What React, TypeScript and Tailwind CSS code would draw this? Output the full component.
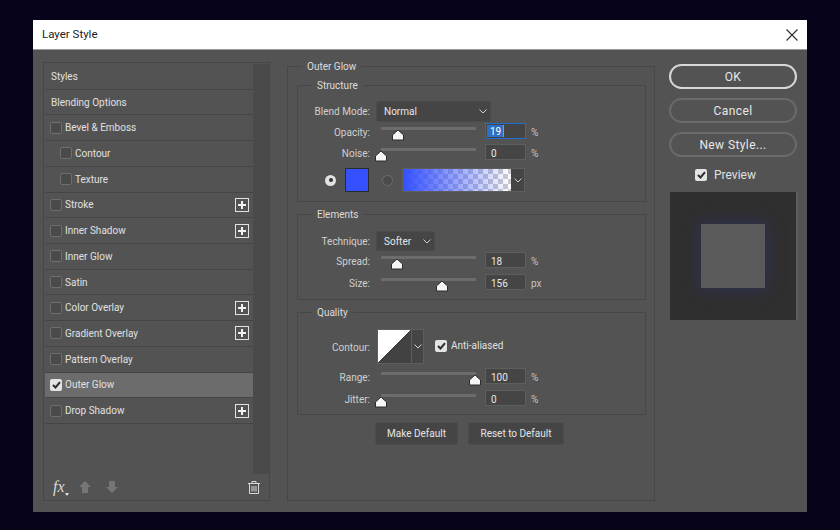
import type { ReactNode } from "react";

const effects = [
  { label: "Styles", kind: "plain" },
  { label: "Blending Options", kind: "plain" },
  { label: "Bevel & Emboss", kind: "check" },
  { label: "Contour", kind: "sub" },
  { label: "Texture", kind: "sub" },
  { label: "Stroke", kind: "check", plus: true },
  { label: "Inner Shadow", kind: "check", plus: true },
  { label: "Inner Glow", kind: "check" },
  { label: "Satin", kind: "check" },
  { label: "Color Overlay", kind: "check", plus: true },
  { label: "Gradient Overlay", kind: "check", plus: true },
  { label: "Pattern Overlay", kind: "check" },
  { label: "Outer Glow", kind: "check", active: true },
  { label: "Drop Shadow", kind: "check", plus: true },
];

function Check({ on = false }: { on?: boolean }) {
  if (on) {
    return (
      <span className="flex h-[12px] w-[12px] shrink-0 items-center justify-center rounded-[2px] bg-[#e4e4e4]">
        <svg width="9" height="8" viewBox="0 0 9 8" fill="none">
          <path d="M1 4l2.5 2.5L8 1.2" stroke="#2e2e2e" strokeWidth="2" />
        </svg>
      </span>
    );
  }
  return <span className="h-[10px] w-[10px] shrink-0 box-content rounded-[2px] border border-[#6e6e6e] bg-[#4a4a4a]" />;
}

function PlusBox() {
  return (
    <span className="ml-auto mr-[4px] flex h-[14px] w-[14px] items-center justify-center border border-[#e2e2e2]">
      <svg width="10" height="10" viewBox="0 0 10 10">
        <path d="M5 1v8M1 5h8" stroke="#f0f0f0" strokeWidth="2" />
      </svg>
    </span>
  );
}

function Group({ title, className, children }: { title: string; className: string; children?: ReactNode }) {
  return (
    <div className={`relative border border-[#474747] ${className}`}>
      <span className="absolute left-[14px] top-[-8px] bg-[#535353] px-[5px] leading-[16px] text-[#dcdcdc]">{title}</span>
      {children}
    </div>
  );
}

function Thumb({ pos }: { pos: number }) {
  return (
    <svg className="absolute top-[6px]" style={{ left: pos - 7 }} width="14" height="12" viewBox="0 0 14 12">
      <path d="M7 1l5.5 5v5h-11V6z" fill="#f6f6f6" stroke="#2c2c2c" strokeWidth="1" strokeLinejoin="round" />
    </svg>
  );
}

function SliderRow({ label, value, unit, pos, focused = false }: { label: string; value: string; unit: string; pos: number; focused?: boolean }) {
  return (
    <div className="flex h-[16px] items-center">
      <span className="w-[72px] shrink-0 translate-y-[1px] text-right text-[#d0d0d0]">{label}</span>
      <div className="relative ml-[11px] h-[16px] w-[95px] shrink-0">
        <div className="mt-[4px] h-[3px] w-full bg-[#6c6c6c]" />
        <Thumb pos={pos} />
      </div>
      {focused ? (
        <span className="ml-[9px] flex h-[16px] w-[41px] shrink-0 items-center border border-[#1f6fd0] bg-[#454545] pl-[1px]">
          <span className="h-[12px] border-r border-r-[#e8833a] bg-[#2f6fc4] pl-[3px] pr-[2px] pt-[1px] leading-[12px] text-white">{value}</span>
        </span>
      ) : (
        <span className="ml-[9px] flex h-[16px] w-[41px] shrink-0 items-center border border-[#5e5e5e] bg-[#454545] pl-[5px] text-[#e6e6e6]">
          <span className="translate-y-[1px]">{value}</span>
        </span>
      )}
      <span className="ml-[5px] translate-y-[1px] text-[#c4c4c4]">{unit}</span>
    </div>
  );
}

function Chevron() {
  return (
    <svg width="8" height="5" viewBox="0 0 8 5" fill="none" className="shrink-0">
      <path d="M.5.5L4 4 7.5.5" stroke="#cfcfcf" />
    </svg>
  );
}

function Select({ value, className }: { value: string; className: string }) {
  return (
    <div className={`flex items-center justify-between rounded-[2px] border border-[#4c4c4c] bg-[#454545] pl-[7px] pr-[3px] text-[#e6e6e6] ${className}`}>
      {value}
      <Chevron />
    </div>
  );
}

function Radio({ on = false }: { on?: boolean }) {
  return on ? (
    <span className="flex h-[11px] w-[11px] shrink-0 items-center justify-center rounded-full bg-[#e2e2e2]">
      <span className="h-[4px] w-[4px] rounded-full bg-[#333]" />
    </span>
  ) : (
    <span className="h-[11px] w-[11px] shrink-0 rounded-full border border-[#6e6e6e] bg-[#4a4a4a]" />
  );
}

function SideButton({ label, primary = false }: { label: string; primary?: boolean }) {
  return (
    <div className={`flex h-[25px] w-[128px] items-center justify-center rounded-full border-2 text-[12px] tracking-[0.4px] text-[#e8e8e8] ${primary ? "border-[#d8d8d8]" : "border-[#6a6a6a]"}`}>
      {label}
    </div>
  );
}

export default function App() {
  return (
    <div className="h-[530px] w-[840px] overflow-hidden bg-[#06031a] pl-[33px] pt-[20px] font-['Roboto',sans-serif] text-[10px]">
      <div className="flex h-[492px] w-[774px] flex-col bg-[#535353]">
        <div className="flex h-[30px] shrink-0 items-center justify-between border-b border-b-[#9a9a9a] bg-white px-[9px] text-[11.5px] text-[#222]">
          Layer Style
          <svg width="12" height="12" viewBox="0 0 12 12">
            <path d="M.5.5l11 11M11.5.5l-11 11" stroke="#333" strokeWidth="1.2" />
          </svg>
        </div>

        <div className="flex flex-1 pl-[10px] pt-[12px]">
          {/* effects list */}
          <div className="flex h-[439px] w-[227px] shrink-0 flex-col border border-[#474747] pl-[1px] pt-[1px]">
            <div className="flex h-[410px] shrink-0">
              <div className="grid h-[360px] w-[208px] shrink-0 auto-rows-fr">
                {effects.map((e) => (
                  <div
                    key={e.label}
                    className={`flex items-center border-b border-b-[#454545] text-[#e0e0e0] ${e.active ? "bg-[#6c6c6c]" : ""} ${e.kind === "plain" ? "pl-[6px]" : e.kind === "sub" ? "pl-[15px]" : "pl-[5px]"}`}
                  >
                    {e.kind !== "plain" && <Check on={e.active} />}
                    <span className={e.kind === "plain" ? "" : "ml-[3px]"}>{e.label}</span>
                    {e.plus && <PlusBox />}
                  </div>
                ))}
              </div>
              <div className="h-full flex-1 bg-[#4a4a4a]" />
            </div>
            <div className="flex flex-1 items-center pl-[8px] pr-[9px] text-[#d8d8d8]">
              <span className="flex w-[26px] items-end font-['Liberation_Serif',serif] text-[16px] italic">
                fx
                <svg className="mb-[3px]" width="4" height="3" viewBox="0 0 4 3">
                  <path d="M0 0h4L2 3z" fill="#e0e0e0" />
                </svg>
              </span>
              <svg width="12" height="12" viewBox="0 0 12 12">
                <path d="M6 0l6 6H9v6H3V6H0z" fill="#767676" />
              </svg>
              <svg className="ml-[15px]" width="12" height="12" viewBox="0 0 12 12">
                <path d="M6 12L0 6h3V0h6v6h3z" fill="#767676" />
              </svg>
              <svg className="ml-auto" width="12" height="13" viewBox="0 0 12 13" fill="none" stroke="#d8d8d8">
                <path d="M0 2.5h12M4 2.5V.5h4v2M1.5 2.5v10h9v-10M4 5v5.5M6 5v5.5M8 5v5.5" />
              </svg>
            </div>
          </div>

          {/* settings */}
          <Group title="Outer Glow" className="ml-[17px] mt-[4px] h-[435px] w-[368px] shrink-0 px-[9px] pt-[18px]">
            <Group title="Structure" className="h-[117px] w-[349px]">
              <div className="mt-[15px] flex h-[21px] items-center">
                <span className="w-[72px] shrink-0 text-right text-[#d0d0d0]">Blend Mode:</span>
                <Select value="Normal" className="ml-[6px] h-[21px] w-[115px]" />
              </div>
              <div className="mt-[1px] flex flex-col gap-[5px]">
                <SliderRow label="Opacity:" value="19" unit="%" pos={17} focused />
                <SliderRow label="Noise:" value="0" unit="%" pos={0} />
              </div>
              <div className="mt-[8px] flex h-[24px] items-center pl-[27px]">
                <Radio on />
                <span className="ml-[9px] h-[24px] w-[24px] shrink-0 border border-[#2b2b2b] bg-[#3450ff]" />
                <span className="ml-[13px] flex"><Radio /></span>
                <div className="ml-[9px] flex h-[24px] border border-[#5e5e5e]">
                  <div className="h-full w-[108px] bg-[linear-gradient(to_right,#3450ff,transparent),repeating-conic-gradient(#cccccc_0_25%,#ffffff_0_50%)] bg-[length:100%_100%,10px_10px]" />
                  <div className="flex w-[13px] items-center justify-center bg-[#454545]">
                    <Chevron />
                  </div>
                </div>
              </div>
            </Group>

            <Group title="Elements" className="mt-[12px] h-[86px] w-[349px]">
              <div className="mt-[16px] flex h-[20px] items-center">
                <span className="w-[72px] shrink-0 text-right text-[#d0d0d0]">Technique:</span>
                <Select value="Softer" className="ml-[6px] h-[20px] w-[59px]" />
              </div>
              <div className="mt-[1px] flex flex-col gap-[6px]">
                <SliderRow label="Spread:" value="18" unit="%" pos={16} />
                <SliderRow label="Size:" value="156" unit="px" pos={61} />
              </div>
            </Group>

            <Group title="Quality" className="mt-[12px] h-[103px] w-[349px]">
              <div className="mt-[16px] flex h-[35px] items-center">
                <span className="w-[72px] shrink-0 translate-y-[1px] text-right text-[#d0d0d0]">Contour:</span>
                <div className="ml-[7px] flex h-[35px] border border-[#5e5e5e]">
                  <div className="w-[33px] bg-[linear-gradient(to_bottom_right,#ffffff_50%,#424242_50%)]" />
                  <div className="flex w-[12px] items-center justify-center border-l border-l-[#5e5e5e] bg-[#454545]">
                    <Chevron />
                  </div>
                </div>
                <span className="mb-[2px] ml-[11px]"><Check on /></span>
                <span className="mb-[2px] ml-[4px] text-[#e0e0e0]">Anti-aliased</span>
              </div>
              <div className="mt-[4px] flex flex-col gap-[6px]">
                <SliderRow label="Range:" value="100" unit="%" pos={94} />
                <SliderRow label="Jitter:" value="0" unit="%" pos={0} />
              </div>
            </Group>

            <div className="ml-[78px] mt-[7px] flex gap-[10px] text-[#e4e4e4]">
              <div className="flex h-[23px] w-[83px] items-center justify-center rounded-[2px] border border-[#4c4c4c] bg-[#454545]">Make Default</div>
              <div className="flex h-[23px] w-[96px] items-center justify-center rounded-[2px] border border-[#4c4c4c] bg-[#454545]">Reset to Default</div>
            </div>
          </Group>

          {/* actions */}
          <div className="ml-[14px] flex w-[129px] shrink-0 flex-col gap-[9px] pt-[2px]">
            <SideButton label="OK" primary />
            <SideButton label="Cancel" />
            <SideButton label="New Style..." />
            <div className="flex items-center gap-[7px] pl-[26px] text-[12px] text-[#e0e0e0]">
              <Check on />
              Preview
            </div>
            <div className="ml-[1px] mt-[-1px] flex h-[128px] w-[128px] items-center justify-center border-r-2 border-r-[#5e5e5e] bg-[#2f2f2f]">
              <div className="h-[64px] w-[64px] bg-[#5a5a5a] shadow-[0_0_14px_2px_#2e3350]" />
            </div>
          </div>
        </div>
      </div>
    </div>
  );
}
